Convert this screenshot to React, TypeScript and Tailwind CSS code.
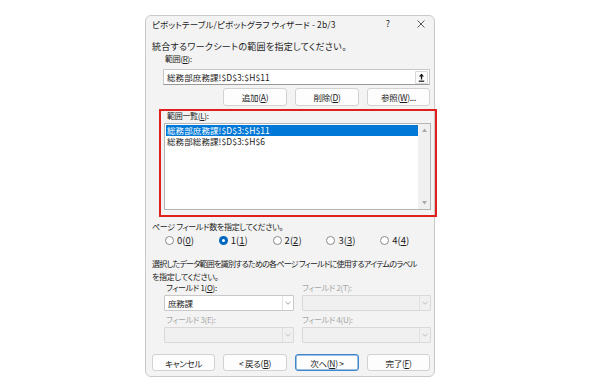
import React from "react";

const U = ({ c }: { c: string }) => <span className="underline underline-offset-1">{c}</span>;

const Chevron = ({ light }: { light?: boolean }) => (
  <svg width="6" height="4" viewBox="0 0 6 4">
    <path d="M0.5 0.8 L3 3.2 L5.5 0.8" fill="none" stroke={light ? "#b5b5b5" : "#8a8a8a"} strokeWidth="0.8" />
  </svg>
);

const Btn = ({ children, focus }: { children: React.ReactNode; focus?: boolean }) => (
  <div
    className={
      "h-full flex items-center justify-center rounded-[3px] bg-[#fdfdfd] text-[8.5px] tracking-[-0.3px] " +
      (focus ? "border border-[#3d86cc] shadow-[inset_0_0_0_0.5px_#3d86cc]" : "border border-[#d2d2d2]")
    }
  >
    {children}
  </div>
);

const Combo = ({ text, disabled }: { text?: string; disabled?: boolean }) => (
  <div
    className={
      "h-[16px] flex items-stretch border rounded-[1px] " +
      (disabled ? "bg-[#f0f0f0] border-[#d8d8d8]" : "bg-white border-[#c8c8c8]")
    }
  >
    <div className="flex-1 flex items-center pl-[3px] text-[#1b1b1b] text-[8.5px]">{text}</div>
    <div
      className={
        "w-[11px] flex items-center justify-center border-l " +
        (disabled ? "border-[#e0e0e0]" : "border-[#e2e2e2]")
      }
    >
      <Chevron light={disabled} />
    </div>
  </div>
);

const Radio = ({ label, u, checked }: { label: string; u: string; checked?: boolean }) => (
  <div className="w-[58px] flex items-center gap-[3px]">
    {checked ? (
      <div className="w-[9px] h-[9px] rounded-full bg-[#0067c0] flex items-center justify-center">
        <div className="w-[3px] h-[3px] rounded-full bg-white" />
      </div>
    ) : (
      <div className="w-[9px] h-[9px] rounded-full border border-[#8a8a8a] bg-white" />
    )}
    <span className="text-[9.5px] tracking-normal">
      {label}(<U c={u} />)
    </span>
  </div>
);

export default function App() {
  return (
    <div
      className="w-[590px] h-[392px] bg-white pl-[145px] pt-[15px] [font-feature-settings:'palt']"
      style={{ fontFamily: '"Noto Sans CJK JP", "Noto Sans", sans-serif' }}
    >
      <div className="w-[290px] h-[362px] box-border rounded-[6px] border border-[#c9c9c9] bg-[#f3f3f3] flex flex-col text-[8px] tracking-[-0.3px] leading-[12px] text-[#1b1b1b]">
        {/* Title bar */}
        <div className="h-[16px] flex items-center pl-[6px] pr-[3px] text-[8.5px] tracking-[0.15px]">
          <span className="whitespace-nowrap">ピボットテーブル/ピボットグラフ ウィザード - 2b/3</span>
          <div className="flex-1" />
          <span className="w-[20px] text-center text-[9px]">?</span>
          <div className="w-[13px]" />
          <div className="w-[20px] flex items-center justify-center">
            <svg width="8" height="8" viewBox="0 0 8 8">
              <path d="M0.5 0.5 L7.5 7.5 M7.5 0.5 L0.5 7.5" stroke="#333" strokeWidth="0.8" />
            </svg>
          </div>
        </div>

        <div className="mt-[9px] h-[12px] pl-[6px] whitespace-nowrap text-[9px] tracking-[0.3px]">
          統合するワークシートの範囲を指定してください。
        </div>
        <div className="h-[12px] pl-[19px]">
          範囲(<U c="R" />):
        </div>

        {/* Range input */}
        <div className="mt-[4px] ml-[17px] w-[267px] h-[16px] bg-white border border-[#c8c8c8] border-b-[#9a9a9a] flex items-center pl-[3px] pr-[1px] text-[8.5px] tracking-[0.1px]">
          <span className="flex-1">総務部庶務課!$D$3:$H$11</span>
          <div className="w-[13px] h-[13px] border border-[#d8d8d8] rounded-[1px] bg-[#fbfbfb] flex items-center justify-center">
            <svg width="7" height="9" viewBox="0 0 7 9">
              <path d="M3.5 1 L3.5 6.5" stroke="#111" strokeWidth="1.3" />
              <path d="M1 3.6 L3.5 0.8 L6 3.6 Z" fill="#111" />
              <path d="M0.8 8.2 L6.2 8.2" stroke="#111" strokeWidth="1.2" />
            </svg>
          </div>
        </div>

        {/* Add / Delete / Browse */}
        <div className="mt-[3px] h-[18px] flex justify-end gap-[8px] pr-[4px]">
          <div className="w-[64px]">
            <Btn>
              追加(<U c="A" />)
            </Btn>
          </div>
          <div className="w-[64px]">
            <Btn>
              削除(<U c="D" />)
            </Btn>
          </div>
          <div className="w-[63px]">
            <Btn>
              参照(<U c="W" />)...
            </Btn>
          </div>
        </div>

        {/* Red highlighted group */}
        <div className="mt-[3px] ml-[13px] w-[278px] h-[108px] box-border border-2 border-[#e0201c] flex flex-col">
          <div className="h-[10px] leading-[10px] pl-[6px]">
            範囲一覧(<U c="L" />):
          </div>
          <div className="mt-[2px] ml-[3px] w-[267px] h-[87px] bg-white border border-[#b4b4b4] flex text-[8.5px] tracking-[0.1px]">
            <div className="flex-1 pt-[1px] pl-[1px]">
              <div className="h-[11px] leading-[11px] bg-[#0078d7] text-white pl-[1px]">総務部庶務課!$D$3:$H$11</div>
              <div className="h-[11px] leading-[11px] pl-[1px]">総務部総務課!$D$3:$H$6</div>
            </div>
            <div className="w-[12px] bg-[#f0f0f0] flex flex-col items-center justify-between py-[4px]">
              <svg width="5" height="4" viewBox="0 0 5 4">
                <path d="M0 4 L2.5 0.5 L5 4 Z" fill="#a8a8a8" />
              </svg>
              <svg width="5" height="4" viewBox="0 0 5 4">
                <path d="M0 0 L2.5 3.5 L5 0 Z" fill="#a8a8a8" />
              </svg>
            </div>
          </div>
        </div>

        <div className="mt-[4px] h-[12px] pl-[6px] whitespace-nowrap">ページ フィールド数を指定してください。</div>

        {/* Radios */}
        <div className="mt-[1px] h-[12px] flex items-center pl-[19px]">
          <Radio label="0" u="0" />
          <Radio label="1" u="1" checked />
          <Radio label="2" u="2" />
          <Radio label="3" u="3" />
          <Radio label="4" u="4" />
        </div>

        <div className="mt-[11px] pl-[6px] leading-[13px] whitespace-nowrap">
          <div className="h-[13px] tracking-[-0.75px]">選択したデータ範囲を識別するための各ページ フィールドに使用するアイテムのラベル</div>
          <div className="h-[13px]">を指定してください。</div>
        </div>

        {/* Fields 1 / 2 */}
        <div className="ml-[18px] w-[267px] grid grid-cols-[130px_129px] gap-x-[8px]">
          <div className="h-[10px] leading-[10px] pl-[2px]">
            フィールド 1(<U c="O" />):
          </div>
          <div className="h-[10px] leading-[10px] text-[#a6a6a6]">フィールド 2(T):</div>
          <div className="mt-[2px]">
            <Combo text="庶務課" />
          </div>
          <div className="mt-[2px]">
            <Combo disabled />
          </div>
          <div className="mt-[3px] h-[12px] pl-[2px] text-[#a6a6a6]">フィールド 3(E):</div>
          <div className="mt-[3px] h-[12px] text-[#a6a6a6]">フィールド 4(U):</div>
          <div className="mt-[1px]">
            <Combo disabled />
          </div>
          <div className="mt-[1px]">
            <Combo disabled />
          </div>
        </div>

        {/* Bottom buttons */}
        <div className="mt-[11px] h-[17px] flex gap-[8px] pl-[6px]">
          <div className="w-[63px]">
            <Btn>キャンセル</Btn>
          </div>
          <div className="w-[64px]">
            <Btn>
              &lt; 戻る(<U c="B" />)
            </Btn>
          </div>
          <div className="w-[64px]">
            <Btn focus>
              次へ(<U c="N" />) &gt;
            </Btn>
          </div>
          <div className="w-[63px]">
            <Btn>
              完了(<U c="F" />)
            </Btn>
          </div>
        </div>
      </div>
    </div>
  );
}
